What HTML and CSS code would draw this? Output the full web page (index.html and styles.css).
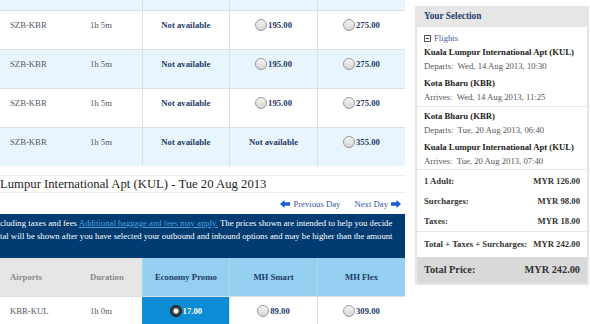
FILE: index.html
```html
<!DOCTYPE html>
<html lang="en">
<head>
    <meta charset="UTF-8">
    <title>Select Flights</title>
    <link rel="stylesheet" href="styles.css">
</head>
<body>
    <div class="page">
        <div class="main">
            <!-- 去程航班 -->
            <table class="fares">
                <colgroup>
                    <col class="c-route"><col class="c-dur"><col class="c-fare"><col class="c-fare"><col class="c-fare">
                </colgroup>
                <tr class="stub"><td></td><td></td><td class="fare"></td><td class="fare"></td><td class="fare"></td></tr>
                <tr>
                    <td class="route">SZB-KBR</td><td class="dur">1h 5m</td>
                    <td class="fare na">Not available</td>
                    <td class="fare"><span class="radio"></span>195.00</td>
                    <td class="fare"><span class="radio"></span>275.00</td>
                </tr>
                <tr class="alt">
                    <td class="route">SZB-KBR</td><td class="dur">1h 5m</td>
                    <td class="fare na">Not available</td>
                    <td class="fare"><span class="radio"></span>195.00</td>
                    <td class="fare"><span class="radio"></span>275.00</td>
                </tr>
                <tr>
                    <td class="route">SZB-KBR</td><td class="dur">1h 5m</td>
                    <td class="fare na">Not available</td>
                    <td class="fare"><span class="radio"></span>195.00</td>
                    <td class="fare"><span class="radio"></span>275.00</td>
                </tr>
                <tr class="alt">
                    <td class="route">SZB-KBR</td><td class="dur">1h 5m</td>
                    <td class="fare na">Not available</td>
                    <td class="fare na">Not available</td>
                    <td class="fare"><span class="radio"></span>355.00</td>
                </tr>
            </table>

            <!-- 回程航班 -->
            <h2 class="day-title">Lumpur International Apt (KUL) - Tue 20 Aug 2013</h2>
            <div class="day-nav">
                <a href="#" class="day-link">
                    <svg width="10" height="8" viewBox="0 0 10 8"><polygon points="0,4 4.5,0 4.5,2.3 10,2.3 10,5.7 4.5,5.7 4.5,8" fill="#1c5fd8"/></svg>
                    Previous Day
                </a>
                <a href="#" class="day-link">
                    Next Day
                    <svg width="10" height="8" viewBox="0 0 10 8"><polygon points="10,4 5.5,0 5.5,2.3 0,2.3 0,5.7 5.5,5.7 5.5,8" fill="#1c5fd8"/></svg>
                </a>
            </div>
            <div class="notice">
                cluding taxes and fees <a href="#">Additional baggage and fees may apply.</a> The prices shown are intended to help you decide<br>
                tal will be shown after you have selected your outbound and inbound options and may be higher than the amount
            </div>
            <table class="fares">
                <colgroup>
                    <col class="c-route"><col class="c-dur"><col class="c-fare"><col class="c-fare"><col class="c-fare">
                </colgroup>
                <tr class="head">
                    <th class="plain">Airports</th><th class="plain">Duration</th>
                    <th class="fare">Economy Promo</th><th class="fare">MH Smart</th><th class="fare">MH Flex</th>
                </tr>
                <tr>
                    <td class="route">KBR-KUL</td><td class="dur">1h 0m</td>
                    <td class="fare selected"><span class="radio on"></span>17.00</td>
                    <td class="fare"><span class="radio"></span>89.00</td>
                    <td class="fare"><span class="radio"></span>309.00</td>
                </tr>
            </table>
        </div>

        <!-- 已选行程 -->
        <aside class="selection">
            <div class="sel-head">Your Selection</div>
            <div class="sel-block">
                <div class="sel-toggle"><span class="minus-box"></span>Flights</div>
                <div class="leg">
                    <div class="place">Kuala Lumpur International Apt (KUL)</div>
                    <div class="when">Departs:&nbsp; Wed, 14 Aug 2013, 10:30</div>
                </div>
                <div class="leg">
                    <div class="place">Kota Bharu (KBR)</div>
                    <div class="when">Arrives:&nbsp; Wed, 14 Aug 2013, 11:25</div>
                </div>
            </div>
            <div class="sel-block second">
                <div class="leg">
                    <div class="place">Kota Bharu (KBR)</div>
                    <div class="when">Departs:&nbsp; Tue, 20 Aug 2013, 06:40</div>
                </div>
                <div class="leg">
                    <div class="place">Kuala Lumpur International Apt (KUL)</div>
                    <div class="when">Arrives:&nbsp; Tue, 20 Aug 2013, 07:40</div>
                </div>
            </div>
            <div class="prices">
                <div class="price-row"><span>1 Adult:</span><span>MYR 126.00</span></div>
                <div class="price-row"><span>Surcharges:</span><span>MYR 98.00</span></div>
                <div class="price-row"><span>Taxes:</span><span>MYR 18.00</span></div>
            </div>
            <div class="price-row subtotal"><span>Total + Taxes + Surcharges:</span><span>MYR 242.00</span></div>
            <div class="price-row grand"><span>Total Price:</span><span>MYR 242.00</span></div>
        </aside>
    </div>
</body>
</html>
```

FILE: styles.css
```css
* {
    box-sizing: border-box;
}

body {
    margin: 0;
    padding: 0;
    background: #ffffff;
    font-family: "Liberation Serif", "DejaVu Serif", serif;
    font-size: 8.7px;
    color: #333;
    overflow: hidden;
}

table, th, td, a, h2 {
    font-family: "Liberation Serif", "DejaVu Serif", serif;
}

.page {
    display: flex;
    gap: 10px;
    width: 590px;
    height: 324px;
    overflow: hidden;
}

.main {
    width: 405px;
    flex-shrink: 0;
}

/* 航班表格 */
.fares {
    width: 405px;
    table-layout: fixed;
    border-collapse: collapse;
    font-size: 8.7px;
}

.c-route { width: 80px; }
.c-dur { width: 62px; }
.c-fare { width: 87.7px; }

.fares td {
    height: 39px;
    padding: 8px 0 0;
    vertical-align: top;
    line-height: 12px;
    border-top: 1px solid #d9e1e6;
    background: #ffffff;
}

.fares tr.alt td {
    background: #e9f5fc;
}

.fares tr.stub td {
    height: 10px;
    padding: 0;
    border-top: none;
    background: #e9f5fc;
}

.fares td.fare {
    text-align: center;
    border-left: 1px solid #d9e1e6;
    font-weight: bold;
    color: #1d3b68;
}

.fares td.route,
.fares td.dur {
    padding-left: 10px;
    color: #4f5964;
}

.fares td.selected {
    background: #0c8cd4;
    color: #ffffff;
    border-left-color: #0c8cd4;
}

/* 单选按钮 */
.radio {
    display: inline-block;
    width: 12px;
    height: 12px;
    margin-right: 1px;
    vertical-align: -3px;
    border: 1px solid #9a9a9a;
    border-radius: 50%;
    background: linear-gradient(#f6f6f6, #d4d4d4);
}

.radio.on {
    border-color: #222;
    background: radial-gradient(circle, #ffffff 0 1.6px, #a0a0a0 2.4px, #444 3.6px, #2a2a2a 5px);
}

/* 日期标题 */
.day-title {
    margin: 9px 0 0;
    padding: 1px 0;
    height: 18px;
    font-size: 12.7px;
    line-height: 15px;
    font-weight: normal;
    color: #1e1e1e;
    border-top: 1px solid #eeeeee;
    border-bottom: 1px solid #eeeeee;
}

.day-nav {
    display: flex;
    justify-content: flex-end;
    gap: 14px;
    height: 21px;
    align-items: center;
    padding-right: 4px;
}

.day-link {
    display: flex;
    align-items: center;
    gap: 3px;
    color: #2e56a9;
    text-decoration: none;
}

/* 提示横幅 */
.notice {
    height: 44px;
    background: #003b72;
    color: #ffffff;
    line-height: 12.5px;
    padding: 3px 0 0;
    white-space: nowrap;
    overflow: hidden;
}

.notice a {
    color: #4e9fdc;
}

.fares tr.head th {
    height: 38px;
    padding: 0;
    font-weight: bold;
    line-height: 12px;
    background: #94cfef;
    color: #1d3b68;
    text-align: center;
    border-left: 1px solid #a9d8f2;
}

.fares tr.head th.plain {
    background: #e5e5e5;
    color: #8a8a8a;
    text-align: left;
    padding-left: 10px;
    border-left: none;
}

/* 右侧已选行程 */
.selection {
    width: 174px;
    margin-top: 6px;
    align-self: flex-start;
    border: 2px solid #e6e6e6;
    border-top: none;
    background: #ffffff;
}

.sel-head {
    height: 21px;
    line-height: 21px;
    padding: 0 7px;
    background: #e6e6e6;
    font-size: 9.3px;
    font-weight: bold;
    color: #1f416f;
}

.sel-block {
    padding: 4px 7px 2px;
    border-bottom: 1px solid #e8e8e8;
    line-height: 14px;
}

.sel-block.second {
    padding: 2px 7px 1px;
}

.sel-toggle {
    display: flex;
    align-items: center;
    gap: 3px;
    color: #3e5a9c;
}

.minus-box {
    position: relative;
    width: 7px;
    height: 7px;
    border: 1px solid #555;
}

.minus-box::after {
    content: "";
    position: absolute;
    left: 1px;
    right: 1px;
    top: 2px;
    height: 1px;
    background: #333;
}

.leg + .leg {
    margin-top: 3px;
}

.place {
    font-weight: bold;
    color: #222;
}

.when {
    color: #555;
}

.prices {
    padding: 1px 0 0;
    border-bottom: 1px solid #e8e8e8;
}

.price-row {
    display: flex;
    justify-content: space-between;
    padding: 0 7px;
    height: 20px;
    line-height: 20px;
    font-weight: bold;
    color: #333;
}

.price-row.subtotal {
    height: 25px;
    line-height: 25px;
}

.price-row.grand {
    height: 26px;
    line-height: 26px;
    background: #d9d9d9;
    font-size: 10.3px;
    color: #333;
}
```
